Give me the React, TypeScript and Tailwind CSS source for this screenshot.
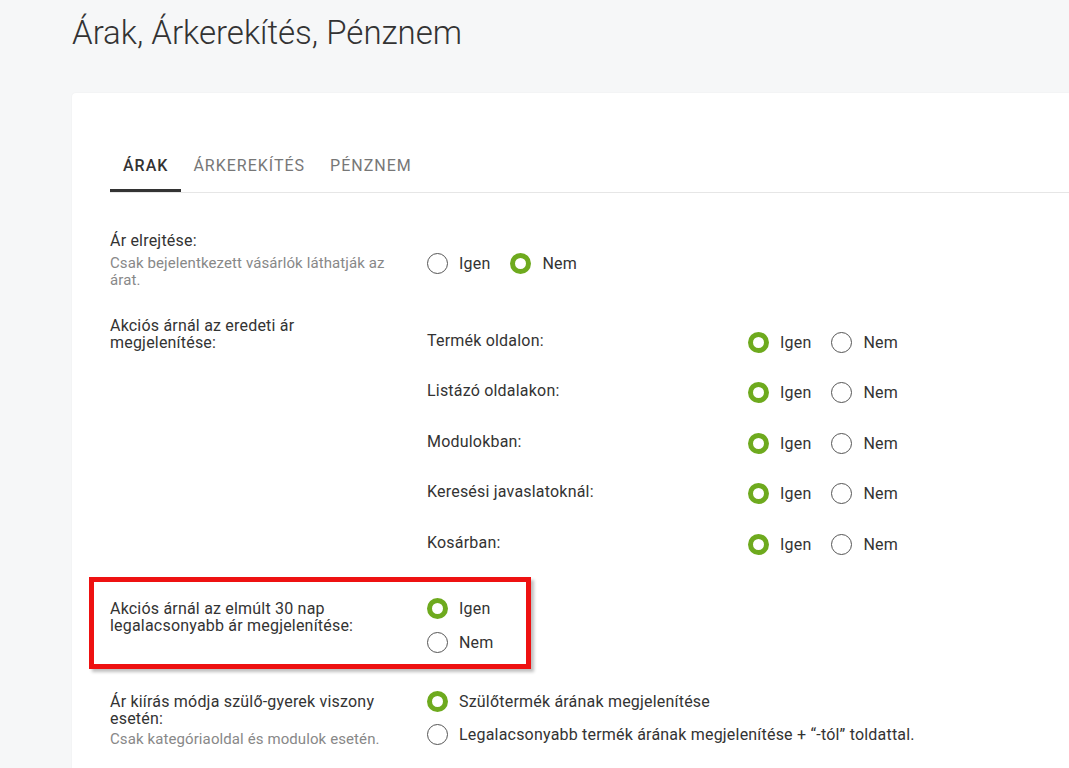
import React from "react";

function Radio({ checked }: { checked: boolean }) {
  return checked ? (
    <span className="box-border inline-block h-[21px] w-[21px] shrink-0 rounded-full border-[5px] border-[#6eaa1e] bg-white" />
  ) : (
    <span className="box-border inline-block h-[21px] w-[21px] shrink-0 rounded-full border-[1.5px] border-[#555] bg-white" />
  );
}

function Opt({ checked, label }: { checked: boolean; label: string }) {
  return (
    <span className="flex items-center gap-[11px]">
      <Radio checked={checked} />
      <span className="whitespace-nowrap text-[16px] leading-[17px] tracking-[0.2px] text-[#333]">{label}</span>
    </span>
  );
}

function IgenNem({ igen }: { igen: boolean }) {
  return (
    <div className="flex items-center gap-[20px]">
      <Opt checked={igen} label="Igen" />
      <Opt checked={!igen} label="Nem" />
    </div>
  );
}

const subRows = [
  "Termék oldalon:",
  "Listázó oldalakon:",
  "Modulokban:",
  "Keresési javaslatoknál:",
  "Kosárban:",
];

const label = "text-[16px] leading-[17px] tracking-[0.2px] text-[#333]";
const sub = "text-[15px] leading-[17px] tracking-[0.1px] text-[#888]";

export default function App() {
  return (
    <div
      className="min-h-screen overflow-hidden bg-[#f6f7f8]"
      style={{ fontFamily: "Roboto, 'Noto Sans', 'Liberation Sans', sans-serif" }}
    >
      <h1 className="pl-[72px] pt-[14px] text-[33px] font-light leading-[38px] text-[#333]">
        Árak, Árkerekítés, Pénznem
      </h1>
      <div className="ml-[72px] mt-[41px] min-h-[680px] rounded-tl-[4px] bg-white pl-[38px] pt-[63px] shadow-[0_0_2px_rgba(0,0,0,0.05)]">
        {/* tabs */}
        <div className="flex border-b border-[#e6e6e6] text-[16px] uppercase leading-[20px] tracking-[1px]">
          <div className="border-b-[3px] border-[#333] px-[13px] pb-[13px] font-medium text-[#333]">
            ÁRAK
          </div>
          <div className="px-[12px] pb-[16px] text-[#777]">ÁRKEREKÍTÉS</div>
          <div className="px-[13px] pb-[16px] text-[#777]">PÉNZNEM</div>
        </div>

        {/* row 1 */}
        <div className="mt-[39px] flex gap-[35px]">
          <div className="w-[282px]">
            <div className={label}>Ár elrejtése:</div>
            <div className={`mt-[6px] ${sub}`}>
              Csak bejelentkezett vásárlók láthatják az árat.
            </div>
          </div>
          <div className="mt-[21px]">
            <IgenNem igen={false} />
          </div>
        </div>

        {/* row 2 */}
        <div className="mt-[28px] flex gap-[35px]">
          <div className={`w-[282px] ${label}`}>
            Akciós árnál az eredeti ár megjelenítése:
          </div>
          <div className="flex flex-col">
            {subRows.map((s) => (
              <div key={s} className="flex h-[50.5px] items-center">
                <div className={`w-[321px] pb-[4px] ${label}`}>{s}</div>
                <IgenNem igen={true} />
              </div>
            ))}
          </div>
        </div>

        {/* row 3 highlighted */}
        <div className="-ml-[21px] mt-[7px] flex w-[442px] gap-[35px] border-[5px] border-[#ee1111] pb-[11px] pl-[16px] pt-[18px] shadow-[3px_3px_3px_rgba(0,0,0,0.25)]">
          <div className={`w-[282px] ${label}`}>
            Akciós árnál az elmúlt 30 nap legalacsonyabb ár megjelenítése:
          </div>
          <div className="-mt-[2px] flex flex-col gap-[13px]">
            <Opt checked={true} label="Igen" />
            <Opt checked={false} label="Nem" />
          </div>
        </div>

        {/* row 4 */}
        <div className="mt-[24px] flex gap-[35px]">
          <div className="w-[282px]">
            <div className={label}>Ár kiírás módja szülő-gyerek viszony esetén:</div>
            <div className={`mt-[4px] ${sub}`}>Csak kategóriaoldal és modulok esetén.</div>
          </div>
          <div className="-mt-[2px] flex flex-col gap-[12px]">
            <Opt checked={true} label="Szülőtermék árának megjelenítése" />
            <Opt checked={false} label="Legalacsonyabb termék árának megjelenítése + “-tól” toldattal." />
          </div>
        </div>
      </div>
    </div>
  );
}
